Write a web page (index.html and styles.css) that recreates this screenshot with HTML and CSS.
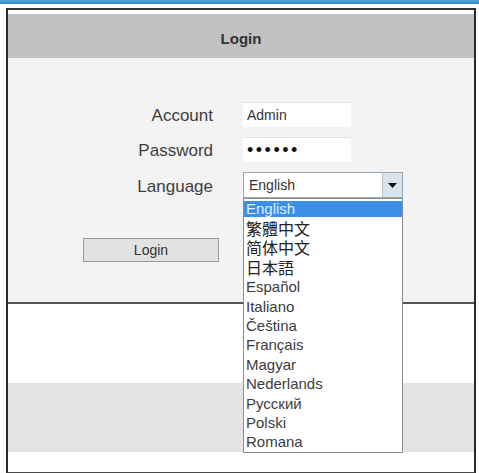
FILE: index.html
```html
<!DOCTYPE html>
<html>
  <head>
    <link rel="stylesheet" href="styles.css">
  </head>
  <body>
    <div class="topbar"></div>
    <div class="frame">
      <div class="header">Login</div>
      <div class="login-box">
        <div class="row">
          <label for="account">Account</label>
          <div class="field">Admin</div>
        </div>
        <div class="row">
          <label for="password">Password</label>
          <div class="field dots">&#8226;&#8226;&#8226;&#8226;&#8226;&#8226;</div>
        </div>
        <div class="row">
          <label for="language">Language</label>
          <div class="select">
            <span class="select-value">English</span>
            <span class="select-arrow">
              <svg width="9" height="5" viewBox="0 0 9 5"><path d="M0 0h9L4.5 5z" fill="#111"/></svg>
            </span>
            <ul class="options">
              <li class="selected">English</li>
              <li class="cjk">繁體中文</li>
              <li class="cjk">简体中文</li>
              <li class="cjk jp">日本語</li>
              <li>Español</li>
              <li>Italiano</li>
              <li>Čeština</li>
              <li>Français</li>
              <li>Magyar</li>
              <li>Nederlands</li>
              <li>Русский</li>
              <li>Polski</li>
              <li>Romana</li>
            </ul>
          </div>
        </div>
        <button class="login-btn">Login</button>
      </div>
      <div class="spacer"></div>
      <div class="footer"></div>
      <div class="bottom"></div>
    </div>
  </body>
</html>
```

FILE: styles.css
```css
body {
  margin: 0;
  font-family: "Liberation Sans", Arial, sans-serif;
  background: #fff;
}
.topbar {
  height: 4px;
  background: linear-gradient(#5aa7dc, #2f86c8);
  margin-bottom: 4px;
}
.frame {
  margin-left: 6px;
  width: 466px;
  border: 2px solid #2a2a2a;
  border-bottom-color: #4a4a4a;
  border-top-color: #333;
}
.header {
  margin-top: 4px;
  height: 44px;
  padding-top: 5px;
  line-height: 39px;
  box-sizing: border-box;
  background: #c2c2c2;
  text-align: center;
  font-weight: bold;
  font-size: 15px;
  color: #333;
}
.login-box {
  position: relative;
  background: #f3f3f3;
  height: 200px;
  padding-top: 44px;
  border-bottom: 2px solid #555;
}
.row {
  display: flex;
  align-items: center;
  margin-bottom: 10px;
}
.row label {
  width: 205px;
  margin-right: 30px;
  padding-top: 3px;
  text-align: right;
  font-size: 17px;
  color: #404040;
}
.field {
  width: 108px;
  height: 25px;
  line-height: 25px;
  padding-left: 4px;
  background: #fff;
  border-top: 1px solid #e2e2e2;
  font-size: 14px;
  color: #333;
  box-sizing: border-box;
}
.dots {
  font-size: 18px;
  letter-spacing: 2.5px;
  color: #111;
}
.select {
  position: relative;
  display: flex;
  width: 160px;
  height: 26px;
  background: #fff;
  border: 1px solid #9aa8b4;
  box-sizing: border-box;
}
.select-value {
  flex: 1;
  line-height: 24px;
  padding-left: 5px;
  font-size: 14px;
  color: #333;
}
.select-arrow {
  width: 19px;
  display: flex;
  align-items: center;
  justify-content: center;
  background: #d9e3eb;
  border-left: 1px solid #b8c4ce;
}
.options {
  position: absolute;
  left: -1px;
  top: 25px;
  width: 160px;
  margin: 0;
  padding: 2px 0 0;
  list-style: none;
  background: #fff;
  border: 1px solid #8c8c8c;
  box-sizing: border-box;
  z-index: 2;
}
.options li {
  height: 19.4px;
  line-height: 19.4px;
  padding-left: 2px;
  font-size: 15px;
  color: #3c3c3c;
}
.options li.selected {
  background: #3b8fe6;
  color: #dff0ff;
  height: 16px;
  line-height: 16px;
  margin-bottom: 2px;
}
.options li.cjk {
  font-family: "Noto Sans CJK TC", "Noto Sans CJK SC", sans-serif;
  font-size: 16px;
  color: #222;
}
.options li.jp {
  font-family: "Noto Sans CJK JP", sans-serif;
}
.login-btn {
  display: block;
  margin: 40px 0 0 75px;
  width: 136px;
  height: 24px;
  background: #e2e2e2;
  border: 1px solid #9a9a9a;
  font-family: "Liberation Sans", Arial, sans-serif;
  font-size: 14px;
  color: #333;
}
.spacer {
  height: 79px;
  background: #fff;
}
.footer {
  height: 69px;
  background: #e5e3e3;
}
.bottom {
  height: 20px;
  background: #fff;
}
```
